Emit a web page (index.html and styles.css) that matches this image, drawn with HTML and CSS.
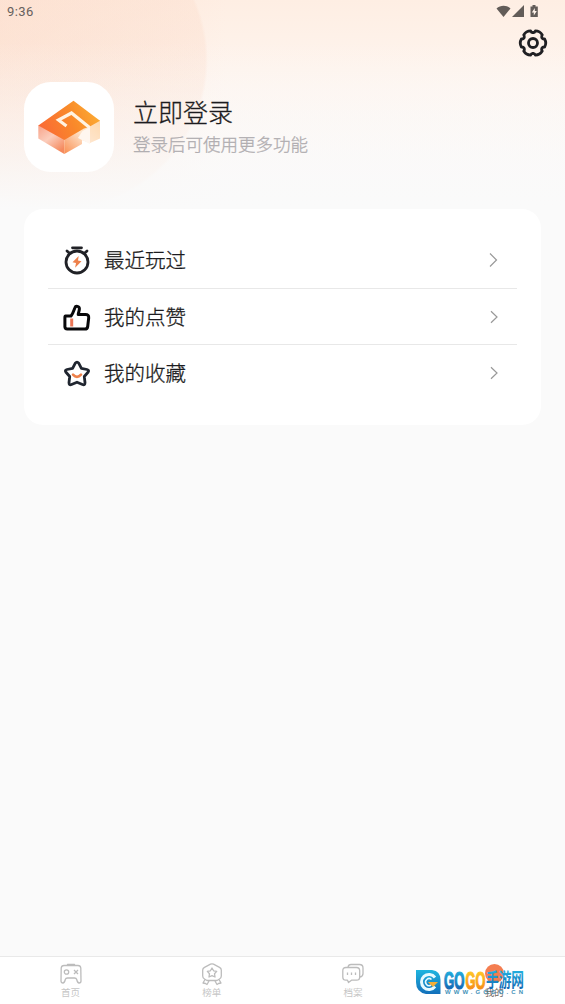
FILE: index.html
```html
<!DOCTYPE html>
<html lang="zh-CN">
<head>
<meta charset="UTF-8">
<title>我的</title>
<link rel="stylesheet" href="styles.css">
</head>
<body>
<div class="app">
  <header class="hero">
    <div class="status">
      <span class="time">9:36</span>
      <svg class="status-icons" width="46" height="16" viewBox="0 0 46 16" fill="#625c58">
        <path d="M.5 4.500C4.500 .8 10.600 .8 14.500 4.500L7.500 13Z"/>
        <path d="M16 13H28V1Z"/>
        <path d="M34.500 2.500h2V1h3v1.500h2.300V13h-7.300Z"/>
        <path d="M38.800 4l-3 4.500h2v3l3-4.500h-2Z" fill="#fff3ea"/>
      </svg>
    </div>
    <div class="toolbar">
      <svg width="32" height="32" viewBox="-16 -16 32 32" fill="none" stroke="#202023" stroke-width="2.800" stroke-linecap="round" stroke-linejoin="round">
        <g id="tooth"><path d="M9-5.200Q9.800-3.700 11.600-4Q13.900 0 11.600 4Q9.800 3.700 9 5.200"/></g>
        <use href="#tooth" transform="rotate(60)"/>
        <use href="#tooth" transform="rotate(120)"/>
        <use href="#tooth" transform="rotate(180)"/>
        <use href="#tooth" transform="rotate(240)"/>
        <use href="#tooth" transform="rotate(300)"/>
        <circle r="4.500"/>
      </svg>
    </div>
    <div class="profile">
      <div class="avatar">
        <svg width="90" height="90" viewBox="0 0 90 90">
          <defs>
            <linearGradient id="top" x1="0" y1=".6" x2="1" y2=".3"><stop stop-color="#fa6a35"/><stop offset=".55" stop-color="#f98a2a"/><stop offset="1" stop-color="#fcae34"/></linearGradient>
            <linearGradient id="left" x1="0" y1="0" x2=".7" y2="1"><stop stop-color="#f8a288"/><stop offset=".5" stop-color="#fbcdbc"/><stop offset="1" stop-color="#f58a5e"/></linearGradient>
            <linearGradient id="right" x1="0" y1="1" x2="1" y2="0"><stop stop-color="#f98e51"/><stop offset=".55" stop-color="#fee5cc"/><stop offset="1" stop-color="#fed9ae"/></linearGradient>
          </defs>
          <path d="M14.300 43L40.300 57V72L14.300 56.500Z" fill="url(#left)"/>
          <path d="M40.300 57L60 46L76 38V56.500L66 61L58 58V62L40.300 72Z" fill="url(#right)"/>
          <path d="M14.300 43.500L49.500 18.700L76 38.700L65 45L60 46.500L40.300 58Z" fill="url(#top)"/>
          <path d="M42.500 44L34.500 38L47.500 31L65.500 45.500" fill="none" stroke="#fff3e2" stroke-width="3.200"/>
          <path d="M58.500 49L66 45V62L54 56Z" fill="#fff6ef"/>
        </svg>
      </div>
      <div class="identity">
        <div class="login">立即登录</div>
        <div class="hint">登录后可使用更多功能</div>
      </div>
    </div>
  </header>

  <main class="card">
    <div class="row">
      <svg class="row-icon" width="30" height="32" viewBox="0 0 30 32" fill="none" stroke="#202126" stroke-width="2.800" stroke-linecap="round">
        <circle cx="15" cy="18" r="11"/>
        <path d="M10.500 3.800H19.500M5 7L7 8.700M25 7L23 8.700"/>
        <path d="M16.700 12L10.500 18.300L14 19.100L13.100 23.800L19.500 17.200L16 16.400Z" fill="#ee814b" stroke="none"/>
      </svg>
      <span class="label">最近玩过</span>
      <svg class="chevron" width="12" height="16" viewBox="0 0 12 16"><path d="M2 1.500L8.500 8L2 14.500"/></svg>
    </div>
    <div class="row">
      <svg class="row-icon" width="30" height="32" viewBox="0 0 30 32" fill="none" stroke="#08080a" stroke-width="3" stroke-linejoin="round">
        <path d="M3.500 15H9C11 12.500 12 9 12.900 6.700C13.700 4.400 17.300 5.200 17.400 7.700C17.400 9.500 16.500 11.300 16.200 13.400H23.500C25.700 13.400 26.900 14.700 26.700 16.800L25.700 25.500C25.500 27.200 24.300 28.100 22.800 28.100H5.200C3.700 28.100 2.900 27.200 2.900 25.800V16.500Q2.900 15 3.500 15Z"/>
        <path d="M9.700 17.500V25.500" stroke="#ea7657" stroke-width="3"/>
      </svg>
      <span class="label">我的点赞</span>
      <svg class="chevron shifted" width="12" height="16" viewBox="0 0 12 16"><path d="M2 2.300L8 8L2 13.700"/></svg>
    </div>
    <div class="row">
      <svg class="row-icon" width="30" height="32" viewBox="0 0 30 32" fill="none" stroke="#202630" stroke-width="2.800" stroke-linejoin="round" stroke-linecap="round">
        <path d="M13.300 6.200Q15 4.100 16.700 6.200L19.400 11.300L25 12.500Q27.600 13.200 26 15.300L22.300 19.500L23 25.700Q23 28.500 20.500 27.500L15 25.200L9.500 27.500Q7 28.500 7 25.700L7.700 19.500L4 15.300Q2.400 13.200 5 12.500L10.600 11.300Z"/>
        <path d="M11 17.700Q15 22 19 17.700" stroke="#ee814b" stroke-width="2.600"/>
      </svg>
      <span class="label">我的收藏</span>
      <svg class="chevron shifted" width="12" height="16" viewBox="0 0 12 16"><path d="M2 2.300L8 8L2 13.700"/></svg>
    </div>
  </main>

  <nav class="tabs">
    <div class="tab">
      <svg width="24" height="24" viewBox="0 0 24 24">
        <path d="M5 3.500H19Q21.500 3.500 21.800 6L22 19Q22 21 20 21Q18.500 21 17.700 17.500Q17.300 16 15.500 16H8.500Q6.700 16 6.300 17.500Q5.500 21 4 21Q2 21 2 19L2.200 6Q2.500 3.500 5 3.500ZM8.500 3V2.300H15.500V3"/>
        <circle cx="7.500" cy="10" r="2.200"/><path d="M15 8L19 12M19 8L15 12"/>
      </svg>
      <span>首页</span>
    </div>
    <div class="tab">
      <svg width="24" height="24" viewBox="0 0 24 24">
        <path d="M10.500 2.200Q12 1.500 13.500 2.200L19.500 5.300Q21.300 6.200 21.300 8V14Q21.300 16 19.500 17L17 18.500H7L4.500 17Q2.700 16 2.700 14V8Q2.700 6.200 4.500 5.300ZM12 6L13.600 8.800L16.700 9.400L14.500 11.700L15 15L12 13.700L9 15L9.500 11.700L7.300 9.400L10.400 8.800Z"/>
        <path d="M5 17.500L3 21L5.500 21.500L7 22.500L9 19M19 17.500L21 21L18.500 21.500L17 22.500L15 19"/>
      </svg>
      <span>榜单</span>
    </div>
    <div class="tab">
      <svg width="24" height="24" viewBox="0 0 24 24">
        <path d="M7 5Q7.500 2.500 10 2.500H18.500Q22 2.500 22 6V11.500Q22 14.500 19 15"/>
        <path d="M5 5.500H15.500Q18.700 5.500 18.700 8.700V15Q18.700 18.200 15.500 18.200H10.500L7.500 20.500L6.500 18.200H5Q1.800 18.200 1.800 15V8.700Q1.800 5.500 5 5.500Z"/>
        <path d="M6.500 10.500V13M10.500 10.500V13M14.500 10.500V13"/>
      </svg>
      <span>档案</span>
    </div>
    <div class="tab active">
      <i class="dot"></i>
      <span>我的</span>
    </div>
    <svg class="brand" width="116" height="34" viewBox="0 0 116 34">
      <defs>
        <linearGradient id="blue" x1="0" y1="0" x2="0" y2="1"><stop stop-color="#20b5df"/><stop offset="1" stop-color="#126fba"/></linearGradient>
        <linearGradient id="type" gradientUnits="userSpaceOnUse" x1="0" y1="5" x2="0" y2="23"><stop stop-color="#22aede"/><stop offset="1" stop-color="#1268b4"/></linearGradient>
        <linearGradient id="gold" gradientUnits="userSpaceOnUse" x1="0" y1="5" x2="0" y2="23"><stop stop-color="#ffc928"/><stop offset="1" stop-color="#f68e14"/></linearGradient>
      </defs>
      <path d="M1 4H17Q25.500 5 25.500 14V28H11Q1 26 1 16Z" fill="url(#blue)"/>
      <path d="M20 11.500A7.500 7.500 0 1 0 20 20.500" fill="none" stroke="#e7faff" stroke-width="3"/>
      <path d="M16.500 13.500A3.500 3.500 0 1 0 16 19" fill="none" stroke="#e7faff" stroke-width="1.500"/>
      <path d="M13 16H23L18 21Z" fill="#f5ae37"/>
      <text class="brand-latin" x="29" y="22.500" textLength="20.500" lengthAdjust="spacingAndGlyphs" fill="url(#type)" stroke="url(#type)">GO</text>
      <text class="brand-latin" x="50.500" y="22.500" textLength="20" lengthAdjust="spacingAndGlyphs" fill="url(#gold)" stroke="url(#gold)">GO</text>
      <text class="brand-cjk" x="71" y="21" textLength="38" lengthAdjust="spacingAndGlyphs" fill="url(#type)">手游网</text>
      <text class="brand-url" x="30" y="28" textLength="78">WWW.GOGO.CN</text>
    </svg>
  </nav>
</div>
</body>
</html>
```
FILE: styles.css
```css
* { box-sizing: border-box; }
body {
  margin: 0;
  font-family: Roboto, "Noto Sans CJK SC", sans-serif;
  color: #25252a;
  background: #fafafa;
}
svg { display: block; flex: none; }
.app { height: 1004px; display: flex; flex-direction: column; }
.hero {
  height: 209px;
  flex: none;
  background:
    linear-gradient(to bottom, rgba(250, 250, 250, 0) 20%, rgba(250, 250, 250, .65) 75%, #fafafa 100%),
    radial-gradient(circle 150px at 58px 60px, rgba(252, 221, 204, .42) 0, rgba(252, 221, 204, .38) 98%, rgba(252, 221, 204, 0) 100%),
    linear-gradient(to right, rgba(252, 216, 196, .4), rgba(252, 216, 196, 0) 40%),
    linear-gradient(to bottom, #feeee3, #fef5ef 40%, #fcf8f6 75%, #fafafa);
}
.status {
  height: 24px;
  display: flex;
  align-items: center;
  justify-content: space-between;
  padding: 0 23px 0 7px;
  font-size: 13px;
  color: #66605c;
}
.time { margin-top: -1px; letter-spacing: .4px; }
.status-icons { margin-top: -1px; }
.toolbar { height: 58px; display: flex; justify-content: flex-end; padding: 3px 16px 0; }
.profile { display: flex; padding-left: 24px; gap: 19px; }
.avatar { width: 90px; height: 90px; border-radius: 27px; background: #fff; overflow: hidden; }
.identity { padding-top: 14px; font-weight: 300; -webkit-text-stroke: .3px; }
.login { font-size: 25px; line-height: 36px; color: #1c1c20; }
.hint { font-size: 17.500px; line-height: 26px; color: #b0adb0; }
.card {
  height: 216px;
  flex: none;
  margin: 0 24px;
  padding: 23px 24px;
  border-radius: 19px;
  background: #fff;
}
.row {
  height: 57px;
  display: flex;
  align-items: center;
  padding: 0 18px 0 14px;
  border-bottom: 1px solid #e8e8e8;
}
.row:nth-child(2) { height: 56px; }
.row:last-child { border-bottom: 0; height: 56px; }
.label { margin-left: 12px; padding-top: 2px; font-size: 20.500px; line-height: 30px; flex: 1; font-weight: 300; color: #1c1c20; -webkit-text-stroke: .3px; }
.chevron { margin-right: -1px; fill: none; stroke: #999; stroke-width: 1.200; }
.shifted { margin-right: -2px; }
.tabs {
  position: relative;
  margin-top: auto;
  height: 48px;
  display: flex;
  background: #fff;
  border-top: 1px solid #e9e9e9;
}
.tab {
  flex: 1;
  display: flex;
  flex-direction: column;
  align-items: center;
  padding-top: 5px;
  font-size: 9.500px;
  line-height: 14px;
  color: #c6c6c6;
}
.tab svg { fill: none; stroke: #bcbcbc; stroke-width: 1.300; stroke-linejoin: round; }
.active { color: #756762; }
.dot { width: 19px; height: 19px; margin: 2px 0 3px; border-radius: 50%; background: #f47d50; }
.brand { position: absolute; left: 415px; top: 9px; }
.brand-latin { font: bold 23px "Liberation Sans", sans-serif; stroke-width: 1.200px; }
.brand-cjk { font: bold 19px "Noto Sans CJK SC", sans-serif; }
.brand-url { font: bold 6px "Liberation Sans", sans-serif; fill: #3f91b8; }
```
